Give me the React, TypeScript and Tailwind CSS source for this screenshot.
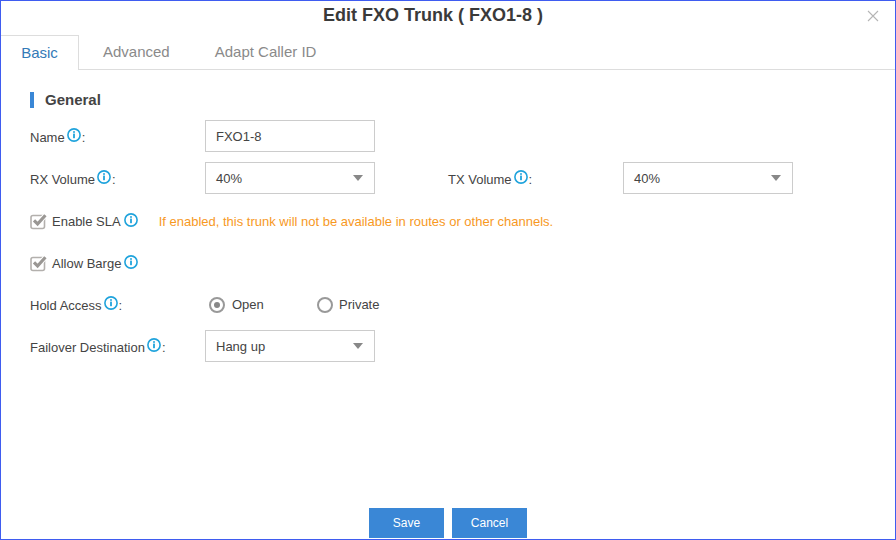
const Info = () => (
  <svg width="16" height="16" viewBox="0 0 16 16" fill="none" className="shrink-0">
    <circle cx="8" cy="8" r="6.1" stroke="#1fa3dc" strokeWidth="1.6" />
    <rect x="7.1" y="6.6" width="1.8" height="4.6" fill="#1fa3dc" />
    <rect x="7.1" y="4.2" width="1.8" height="1.6" fill="#1fa3dc" />
  </svg>
);

const Check = () => (
  <svg width="18" height="17" viewBox="0 0 18 17" fill="none" className="shrink-0">
    <rect x="1" y="2.5" width="13.5" height="13" rx="2" stroke="#b3b0ad" strokeWidth="1.6" fill="#fff" />
    <path d="M4 7.4 L7.6 11 L15.4 2.2" stroke="#fff" strokeWidth="5" fill="none" />
    <path d="M4 7.4 L7.6 11 L15.4 2.2" stroke="#9a9794" strokeWidth="3.2" fill="none" />
  </svg>
);

const Field = ({ value, arrow }: { value: string; arrow?: boolean }) => (
  <div className="w-[170px] h-8 border border-[#cccccc] flex items-center justify-between pl-[10px] pr-[11px] text-[#444444] shrink-0">
    <span className="pt-[2px]">{value}</span>
    {arrow && <span className="w-0 h-0 border-x-[5px] border-x-transparent border-t-[6px] border-t-[#888888]" />}
  </div>
);

const Label = ({ text }: { text: string }) => (
  <div className="w-[175px] flex items-center shrink-0 text-[#444444]">
    <span className="mt-[4px]">{text}</span>
    <span className="ml-[1px] -mt-[3px]"><Info /></span>
    <span className="mt-[4px]">:</span>
  </div>
);

const Radio = ({ checked, text }: { checked?: boolean; text: string }) => (
  <div className={checked ? "flex items-center gap-[7px] text-[#444444]" : "flex items-center gap-[6px] text-[#444444]"}>
    <span className="w-4 h-4 rounded-full border-2 border-[#999999] flex items-center justify-center">
      {checked && <span className="w-1.5 h-1.5 rounded-full bg-[#888888]" />}
    </span>
    <span>{text}</span>
  </div>
);

export default function App() {
  return (
    <div className="w-[896px] h-[540px] border border-[#3f5cf0] bg-white flex flex-col text-[13px] overflow-hidden" style={{ fontFamily: '"Liberation Sans", Arial, sans-serif' }}>
      <div className="h-[34px] relative flex items-center justify-center pr-[30px] shrink-0">
        <h1 className="text-[18px] font-bold text-[#3a3a3a] -mt-[5px]">Edit FXO Trunk ( FXO1-8 )</h1>
        <svg width="12" height="12" viewBox="0 0 12 12" className="absolute right-[16px] top-[9px]">
          <path d="M1 1 L11 11 M11 1 L1 11" stroke="#b5b5b5" strokeWidth="1.1" />
        </svg>
      </div>
      <div className="h-[35px] flex border-b border-[#dddddd] text-[15px] shrink-0">
        <div className="w-[78px] h-[35px] border-t border-r border-[#dddddd] bg-white flex items-center justify-center text-[#337ab7]">Basic</div>
        <div className="ml-[24px] flex items-center text-[#8a8a8a]">Advanced</div>
        <div className="ml-[45px] flex items-center text-[#8a8a8a]">Adapt Caller ID</div>
      </div>
      <div className="flex-1 pl-[29px] flex flex-col">
        <div className="mt-[22px] h-4 flex items-center gap-[11px]">
          <span className="w-1 h-4 bg-[#3a87d6]" />
          <span className="text-[15px] font-bold text-[#444444]">General</span>
        </div>
        <div className="mt-3 flex items-center">
          <Label text="Name" />
          <Field value="FXO1-8" />
        </div>
        <div className="mt-[10px] flex items-center">
          <Label text="RX Volume" />
          <Field value="40%" arrow />
          <div className="ml-[73px]"><Label text="TX Volume" /></div>
          <Field value="40%" arrow />
        </div>
        <div className="mt-[18px] h-[18px] flex items-center">
          <Check />
          <span className="ml-1 mt-[2px] text-[#444444]">Enable SLA</span>
          <span className="ml-[2px] -mt-[3px]"><Info /></span>
          <span className="ml-[20px] mt-[2px] text-[#f7991f]">If enabled, this trunk will not be available in routes or other channels.</span>
        </div>
        <div className="mt-6 h-[18px] flex items-center">
          <Check />
          <span className="ml-1 mt-[2px] text-[#444444]">Allow Barge</span>
          <span className="ml-[2px] -mt-[3px]"><Info /></span>
        </div>
        <div className="mt-[23px] h-[18px] flex items-center">
          <Label text="Hold Access" />
          <div className="ml-[4px] mt-[2px] w-[108px]"><Radio checked text="Open" /></div>
          <div className="mt-[2px]"><Radio text="Private" /></div>
        </div>
        <div className="mt-[17px] flex items-center">
          <Label text="Failover Destination" />
          <Field value="Hang up" arrow />
        </div>
      </div>
      <div className="flex justify-center gap-2 pb-[1px] shrink-0">
        <button className="w-[75px] h-[30px] bg-[#3a87d6] text-white text-[12px]">Save</button>
        <button className="w-[75px] h-[30px] bg-[#3a87d6] text-white text-[12px]">Cancel</button>
      </div>
    </div>
  );
}
